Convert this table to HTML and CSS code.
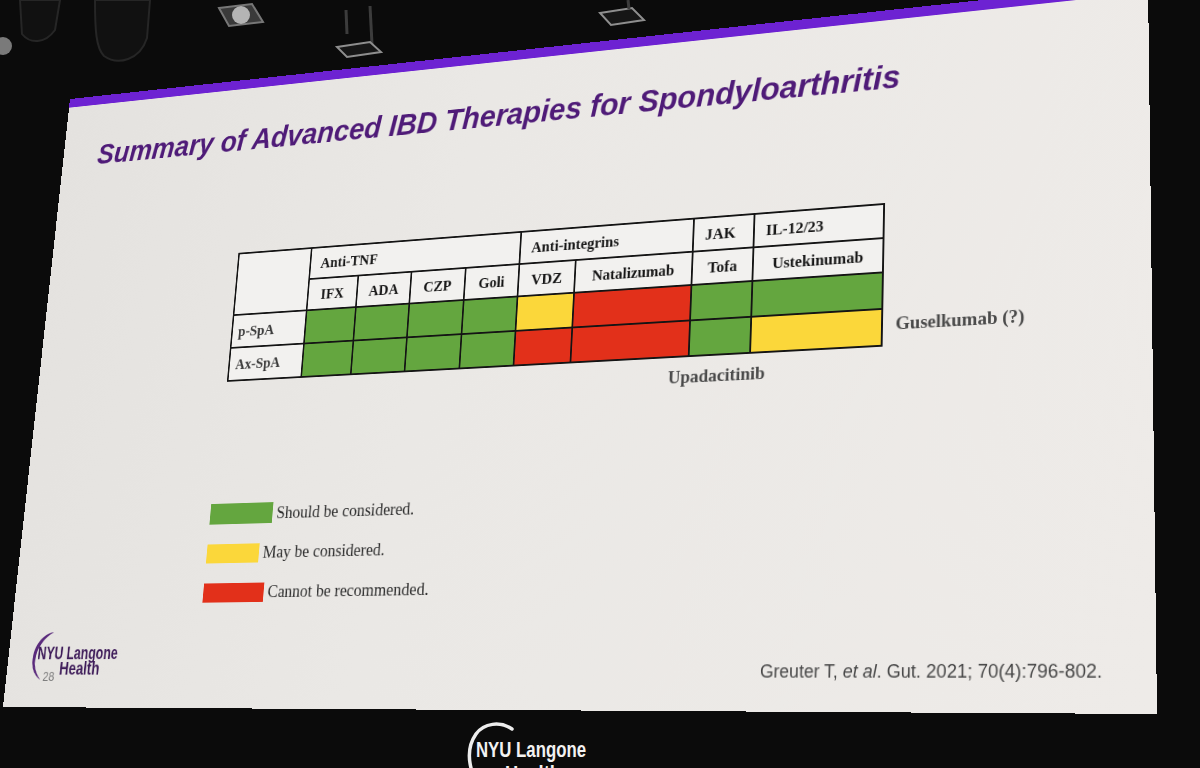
FILE: index.html
```html
<!DOCTYPE html>
<html lang="en">
<head>
<meta charset="utf-8">
<title>Summary of Advanced IBD Therapies for Spondyloarthritis</title>
<link rel="stylesheet" href="styles.css">
</head>
<body>
<div class="stage">
  <svg class="backdrop" viewBox="0 0 1200 768" aria-hidden="true">
    <path class="fixture" d="M95,0 L150,0 L147,38 C140,60 118,66 104,56 C96,48 95,30 95,0 Z"/>
    <path class="fixture" d="M20,0 L60,0 L55,30 C45,44 30,44 22,34 Z"/>
    <circle class="lamp" cx="3" cy="46" r="9"/>
    <polygon class="lightbox" points="219,8 252,4 263,22 229,26"/>
    <circle class="lens" cx="241" cy="15" r="9"/>
    <line class="rod" x1="370" y1="6" x2="372" y2="44"/>
    <line class="rod" x1="346" y1="10" x2="347" y2="34"/>
    <polygon class="frame" points="337,47 370,42 381,52 347,57"/>
    <polygon class="frame" points="600,13 632,8 644,20 611,25"/>
    <line class="rod" x1="628" y1="0" x2="629" y2="9"/>
    <path class="stage-arc" d="M512,729 C500,721 484,723 476,734 C469,744 468,756 471,768"/>
    <text class="stage-logo" x="476" y="757" textLength="110" lengthAdjust="spacingAndGlyphs">NYU Langone</text>
    <text class="stage-logo" x="505" y="781" textLength="56" lengthAdjust="spacingAndGlyphs">Health</text>
  </svg>

  <div class="slide">
    <div class="bar"></div>
    <h1 class="title">Summary of Advanced IBD Therapies for Spondyloarthritis</h1>

    <div class="table-row">
      <table class="matrix">
        <colgroup>
          <col class="w94"><col class="w62"><col class="w66"><col class="w66"><col class="w64">
          <col class="w66"><col class="w133"><col class="w67"><col class="w139">
        </colgroup>
        <tr class="r-group">
          <td class="corner" rowspan="2"></td>
          <td class="grp" colspan="4">Anti-TNF</td>
          <td class="grp" colspan="2">Anti-integrins</td>
          <td class="grp">JAK</td>
          <td class="grp">IL-12/23</td>
        </tr>
        <tr class="r-drug">
          <td class="drug">IFX</td>
          <td class="drug">ADA</td>
          <td class="drug">CZP</td>
          <td class="drug">Goli</td>
          <td class="drug">VDZ</td>
          <td class="drug">Natalizumab</td>
          <td class="drug">Tofa</td>
          <td class="drug">Ustekinumab</td>
        </tr>
        <tr class="r-data">
          <td class="lbl">p-SpA</td>
          <td class="g"></td><td class="g"></td><td class="g"></td><td class="g"></td>
          <td class="y"></td><td class="r"></td>
          <td class="g"></td><td class="g"></td>
        </tr>
        <tr class="r-data">
          <td class="lbl">Ax-SpA</td>
          <td class="g"></td><td class="g"></td><td class="g"></td><td class="g"></td>
          <td class="r"></td><td class="r"></td>
          <td class="g"></td><td class="y"></td>
        </tr>
      </table>
      <div class="note note-side">Guselkumab (?)</div>
    </div>
    <div class="note note-below">Upadacitinib</div>

    <ul class="legend">
      <li class="legend-row"><span class="swatch sw-g"></span>Should be considered.</li>
      <li class="legend-row"><span class="swatch sw-y"></span>May be considered.</li>
      <li class="legend-row"><span class="swatch sw-r"></span>Cannot be recommended.</li>
    </ul>

    <footer class="footer">
      <svg class="logo" width="124" height="64" viewBox="0 0 124 64" aria-label="NYU Langone Health">
        <path class="logo-arc" d="M30,7 C15,8 4,23 5,40 C6,49 10,55 18,60 C12,53 8,46 8.5,38 C9,25 17,13 30,7 Z"/>
        <text class="logo-t" x="11" y="37" textLength="106" lengthAdjust="spacingAndGlyphs">NYU Langone</text>
        <text class="logo-t" x="42" y="54" textLength="53" lengthAdjust="spacingAndGlyphs">Health</text>
        <text class="pg" x="21" y="61">28</text>
      </svg>
      <p class="cite">Greuter T, <i>et al</i>. Gut. 2021; 70(4):796-802.</p>
    </footer>
  </div>
</div>
</body>
</html>
```

FILE: styles.css
```css
html, body {
  margin: 0;
  padding: 0;
  background: #0b0b0b;
  overflow: hidden;
}

.stage {
  width: 1200px;
  height: 768px;
  display: grid;
  grid-template-columns: 1200px;
  grid-template-rows: 768px;
  overflow: hidden;
  background: #0b0b0b;
}

/* ---------- room / backdrop ---------- */
.backdrop {
  grid-area: 1 / 1;
  width: 1200px;
  height: 768px;
  display: block;
}
.fixture { fill: #111; stroke: #262626; stroke-width: 2; }
.lamp { fill: #7a7a7a; }
.lightbox { fill: #3a3a3a; stroke: #777; stroke-width: 2; }
.lens { fill: #b4b4b4; }
.rod { stroke: #3c3c3c; stroke-width: 3; }
.frame { fill: #161616; stroke: #8e8e8e; stroke-width: 2; }
.stage-arc { fill: none; stroke: #ededed; stroke-width: 3.5; stroke-linecap: round; }
.stage-logo {
  font-family: "Liberation Sans", Arial, sans-serif;
  font-weight: bold;
  font-size: 22px;
  fill: #f2f2f2;
}

/* ---------- projected slide ---------- */
.slide {
  grid-area: 1 / 1;
  align-self: start;
  justify-self: start;
  width: 1280px;
  height: 720px;
  box-sizing: border-box;
  transform-origin: 0 0;
  transform: matrix3d(0.690811, -0.0890328, 0, -0.000131861,
                      -0.093325, 0.781068, 0, -0.0000896417,
                      0, 0, 1, 0,
                      70, 99, 0, 1);
  background: linear-gradient(100deg, #e4e2df 0%, #eae8e5 40%, #eeebe8 100%);
  display: flex;
  flex-direction: column;
}

.bar {
  flex: none;
  height: 11px;
  background: #6d22d2;
}

.title {
  margin: 43px 0 0 48px;
  font-family: "Liberation Sans", Arial, sans-serif;
  font-style: italic;
  font-weight: bold;
  font-size: 35px;
  line-height: 40px;
  color: #4f1b78;
  white-space: nowrap;
}

.table-row {
  display: flex;
  align-items: flex-end;
  margin: 115px 0 0 254px;
}

.matrix {
  border-collapse: collapse;
  table-layout: fixed;
  width: 757px;
  font-family: "Liberation Serif", "Times New Roman", serif;
  font-weight: bold;
  font-size: 17px;
  line-height: 1;
  color: #161616;
}
.matrix td {
  border: 2px solid #141414;
  padding: 0;
  vertical-align: middle;
  background: #f2f1ef;
  white-space: nowrap;
}
.w94 { width: 94px; }
.w62 { width: 62px; }
.w64 { width: 64px; }
.w66 { width: 66px; }
.w67 { width: 67px; }
.w133 { width: 133px; }
.w139 { width: 139px; }

.r-group { height: 36px; }
.r-drug { height: 36px; }
.r-data { height: 38px; }

.matrix .grp { text-align: left; padding-left: 12px; }
.matrix .drug { text-align: center; }
.matrix .lbl {
  text-align: left;
  padding-left: 7px;
  font-size: 17px;
  color: #3a3a3a;
}
.matrix .g { background: #64a63f; }
.matrix .y { background: #fbd73a; }
.matrix .r { background: #e2301a; }

.note {
  font-family: "Liberation Serif", "Times New Roman", serif;
  font-weight: bold;
  font-size: 19px;
  line-height: 24px;
  color: #4a4a4a;
  white-space: nowrap;
}
.note-side { margin: 0 0 11px 13px; }
.note-below { margin: 9px 0 0 784px; }

.legend {
  list-style: none;
  margin: 105px 0 0 248px;
  padding: 0;
  display: flex;
  flex-direction: column;
  gap: 21px;
}
.legend-row {
  display: flex;
  align-items: center;
  gap: 5px;
  font-family: "Liberation Serif", "Times New Roman", serif;
  font-size: 19px;
  line-height: 22px;
  color: #2e2e2e;
}
.swatch { display: block; flex: none; }
.sw-g { width: 79px; height: 23px; background: #64a63f; }
.sw-y { width: 66px; height: 21px; background: #fbd73a; }
.sw-r { width: 76px; height: 21px; background: #e2301a; }

.footer {
  margin-top: auto;
  display: flex;
  justify-content: space-between;
  align-items: flex-end;
  padding: 0 50px 26px 28px;
}
.logo { display: block; overflow: visible; }
.logo-arc { fill: #5a2a7c; }
.logo-t {
  font-family: "Liberation Sans", Arial, sans-serif;
  font-weight: bold;
  font-size: 20px;
  fill: #3f1d5a;
}
.pg {
  font-family: "Liberation Sans", Arial, sans-serif;
  font-size: 14px;
  fill: #7d7d7d;
}
.cite {
  margin: 0 0 2px 0;
  font-family: "Liberation Sans", Arial, sans-serif;
  font-size: 18px;
  line-height: 22px;
  color: #474747;
  white-space: nowrap;
}
```
